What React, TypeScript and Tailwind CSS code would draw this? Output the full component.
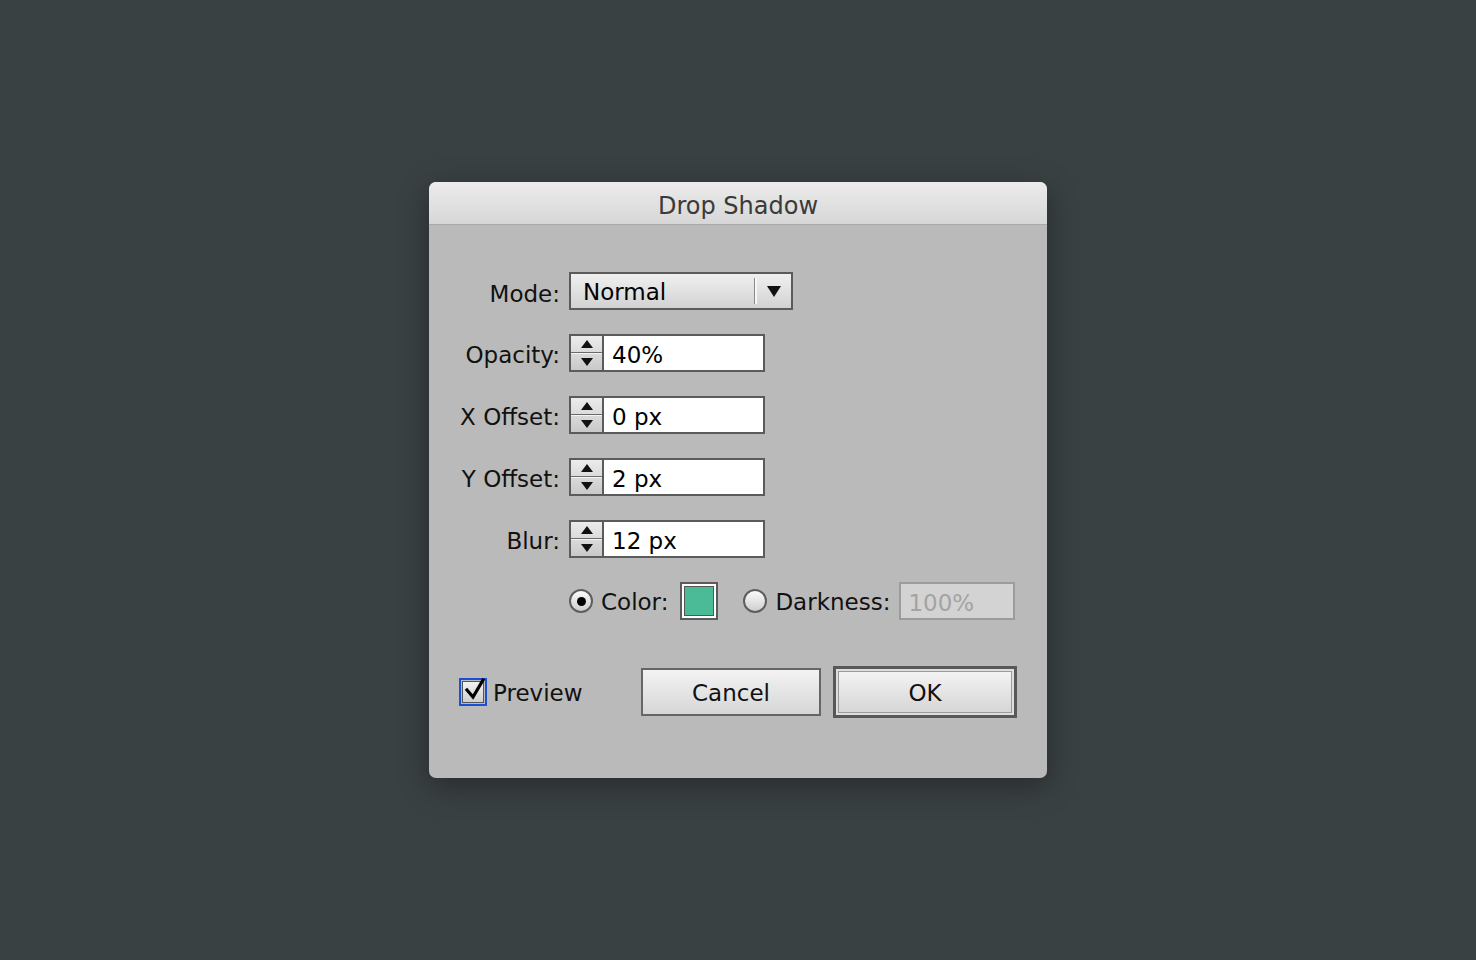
import React from 'react';

const FONT = { fontFamily: '"DejaVu Sans", "Liberation Sans", sans-serif' };

const Spinner: React.FC = () => (
  <div className="flex flex-col w-[33px] h-full border-r-2 border-[#5b5b5b] bg-gradient-to-b from-[#ececec] to-[#c9c9c9]">
    <div className="flex-1 flex items-center justify-center border-b border-[#6a6a6a]">
      <svg width="12" height="8" viewBox="0 0 12 8"><path d="M6 0L12 8H0z" fill="#111" /></svg>
    </div>
    <div className="flex-1 flex items-center justify-center border-t border-[#f4f4f4]">
      <svg width="12" height="8" viewBox="0 0 12 8"><path d="M0 0H12L6 8z" fill="#111" /></svg>
    </div>
  </div>
);

const NumberRow: React.FC<{ label: string; value: string }> = ({ label, value }) => (
  <div className="flex items-center h-[38px]">
    <div className="w-[140px] shrink-0 text-right pr-[9px] pt-[5px] text-[23px] text-[#111]">{label}</div>
    <div className="flex w-[196px] h-[38px] border-2 border-[#5b5b5b] bg-white">
      <Spinner />
      <div className="flex-1 flex items-center pl-[8px] pt-[5px] text-[23px] text-black">{value}</div>
    </div>
  </div>
);

const Radio: React.FC<{ checked?: boolean }> = ({ checked }) => (
  <div className="w-[24px] h-[24px] shrink-0 rounded-full border-2 border-[#5e5e5e] bg-gradient-to-b from-[#fbfbfb] to-[#cfcfcf] flex items-center justify-center">
    {checked && <div className="w-[9px] h-[9px] rounded-full bg-black" />}
  </div>
);

export default function App() {
  return (
    <div className="w-full h-[960px] bg-[#3a4143] flex items-start justify-center pt-[182px]" style={FONT}>
      <div className="w-[618px] h-[596px] rounded-[7px] bg-[#bababa] shadow-[0_8px_30px_rgba(0,0,0,0.35)] flex flex-col overflow-hidden">
        <div className="h-[43px] shrink-0 bg-gradient-to-b from-[#ececec] to-[#d7d7d7] border-b border-[#a9a9a9] flex items-center justify-center pt-[6px] text-[24px] text-[#3a3a3a]">
          Drop Shadow
        </div>

        <div className="flex flex-col gap-[24px] mt-[47px]">
          <div className="flex items-center h-[38px]">
            <div className="w-[140px] shrink-0 text-right pr-[9px] pt-[6px] text-[23px] text-[#111]">Mode:</div>
            <div className="flex items-center w-[224px] h-[38px] border-2 border-[#5b5b5b] bg-gradient-to-b from-[#f0f0f0] to-[#d2d2d2]">
              <div className="flex-1 pl-[12px] pt-[2px] text-[23px] text-black">Normal</div>
              <div className="w-[3px] h-[26px] border-l border-[#8a8a8a] bg-[#f6f6f6]" />
              <div className="w-[34px] flex items-center justify-center">
                <svg width="14" height="11" viewBox="0 0 14 11"><path d="M0 0H14L7 11z" fill="#111" /></svg>
              </div>
            </div>
          </div>
          <NumberRow label="Opacity:" value="40%" />
          <NumberRow label="X Offset:" value="0 px" />
          <NumberRow label="Y Offset:" value="2 px" />
          <NumberRow label="Blur:" value="12 px" />

          <div className="flex items-center h-[38px] pl-[140px]">
            <Radio checked />
            <span className="ml-[8px] pt-[2px] text-[23px] text-[#111]">Color:</span>
            <div className="ml-[12px] w-[38px] h-[38px] shrink-0 border-2 border-[#5b5b5b] bg-white p-[2px]">
              <div className="w-full h-full border border-[#555] bg-[#4bba97]" />
            </div>
            <div className="ml-[25px]"><Radio /></div>
            <span className="ml-[8px] pt-[2px] text-[23px] text-[#111]">Darkness:</span>
            <div className="ml-[9px] w-[116px] h-[38px] shrink-0 border-2 border-[#9c9c9c] bg-[#d3d3d3] flex items-center pl-[7px] pt-[4px] text-[23px] text-[#a3a3a3]">
              100%
            </div>
          </div>
        </div>

        <div className="flex items-center mt-[46px] h-[52px]">
          <div className="ml-[30px] w-[28px] h-[28px] shrink-0 border-2 border-[#1a4fd8] p-[1px]">
            <div className="relative w-full h-full border border-[#555] bg-gradient-to-b from-[#f2f2f2] to-[#cfcfcf]">
              <svg className="absolute left-[1px] -top-[4px]" width="22" height="24" viewBox="0 0 22 24">
                <path d="M3 12L9 19L19 2" stroke="#000" strokeWidth="3.2" fill="none" strokeLinecap="square" />
              </svg>
            </div>
          </div>
          <span className="ml-[6px] pt-[2px] text-[23px] text-[#111]">Preview</span>
          <button className="ml-[auto] mr-[12px] w-[180px] h-[48px] shrink-0 border-2 border-[#666] bg-gradient-to-b from-[#f3f3f3] to-[#d6d6d6] text-[23px] text-[#111] flex items-center justify-center pt-[3px]">
            Cancel
          </button>
          <button className="mr-[30px] w-[184px] h-[52px] shrink-0 border-[3px] border-[#585858] p-[2px] bg-[#dedede]">
            <div className="w-full h-full bg-gradient-to-b from-[#f3f3f3] to-[#d6d6d6] border border-[#9a9a9a] text-[23px] text-[#111] flex items-center justify-center pt-[3px]">
              OK
            </div>
          </button>
        </div>
      </div>
    </div>
  );
}
